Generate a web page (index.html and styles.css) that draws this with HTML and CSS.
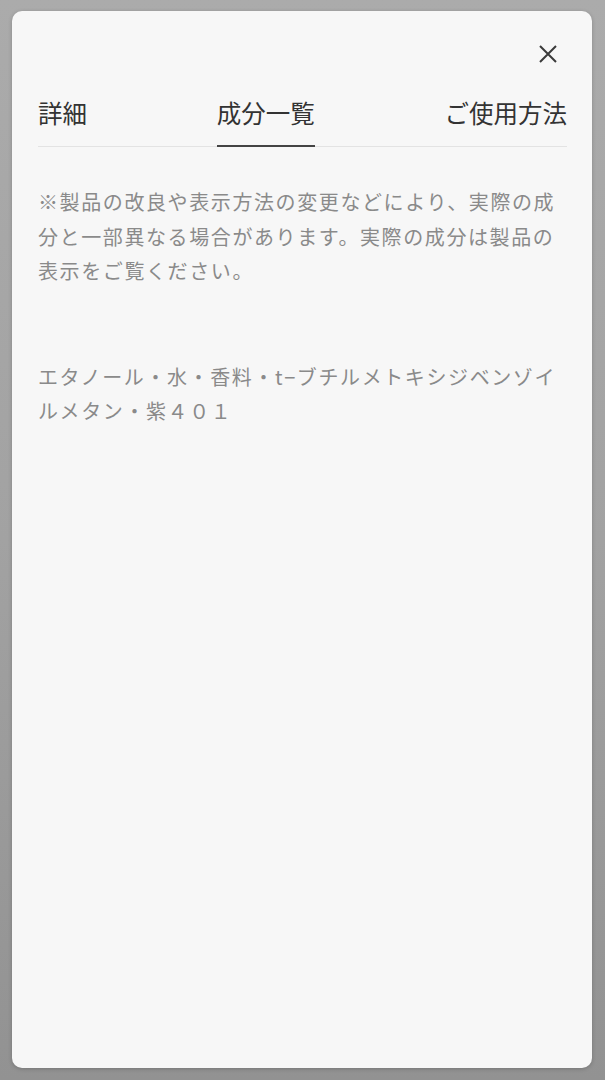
FILE: index.html
```html
<!DOCTYPE html>
<html lang="ja">

<head>
    <meta charset="UTF-8">
    <meta name="viewport" content="width=device-width, initial-scale=1.0">
    <title>成分一覧</title>
    <link rel="stylesheet" href="styles.css">
</head>

<body>
    <div class="modal">
        <div class="close-row">
            <button class="close-button" type="button" aria-label="閉じる">
                <svg width="24" height="24" viewBox="0 0 24 24">
                    <path d="M4 4 L20 20 M20 4 L4 20" stroke="#3a3a3a" stroke-width="2" fill="none" />
                </svg>
            </button>
        </div>
        <div class="tabs">
            <div class="tab">詳細</div>
            <div class="tab active">成分一覧</div>
            <div class="tab">ご使用方法</div>
        </div>
        <p class="notice">※製品の改良や表示方法の変更などにより、実際の成分と一部異なる場合があります。実際の成分は製品の表示をご覧ください。</p>
        <p class="ingredients">エタノール・水・香料・t−ブチルメトキシジベンゾイルメタン・紫４０１</p>
    </div>
</body>

</html>
```

FILE: styles.css
```css
/* CSS styles */
body {
    margin: 0;
    padding: 0;
    font-family: 'Noto Sans CJK JP', 'Noto Sans', sans-serif;
    background: linear-gradient(#ababab, #a2a2a2 50%, #929292);
    height: 1080px;
    overflow: hidden;
}

.modal {
    box-sizing: border-box;
    height: 1057px;
    margin: 11px 13px 0 12px;
    padding: 31px 25px 0 26px;
    background-color: #f7f7f7;
    border-radius: 10px;
    box-shadow: 0 1px 4px rgba(0, 0, 0, 0.2);
}

.close-row {
    display: flex;
    justify-content: flex-end;
    padding-right: 7px;
}

.close-button {
    width: 24px;
    height: 24px;
    padding: 0;
    border: none;
    background: none;
    cursor: pointer;
}

.close-button svg {
    display: block;
}

.tabs {
    display: flex;
    justify-content: space-between;
    margin-top: 27px;
    border-bottom: 1px solid #e3e3e3;
}

.tab {
    font-size: 24.5px;
    line-height: 40px;
    padding-bottom: 12px;
    color: #333;
    margin-bottom: -1px;
    border-bottom: 2px solid transparent;
}

.tab.active {
    border-bottom-color: #444;
}

.notice,
.ingredients {
    margin: 0;
    font-size: 20px;
    line-height: 34.5px;
    letter-spacing: 1.6px;
    color: #8a8a8a;
}

.notice {
    margin-top: 38px;
}

.ingredients {
    margin-top: 71px;
}
```
